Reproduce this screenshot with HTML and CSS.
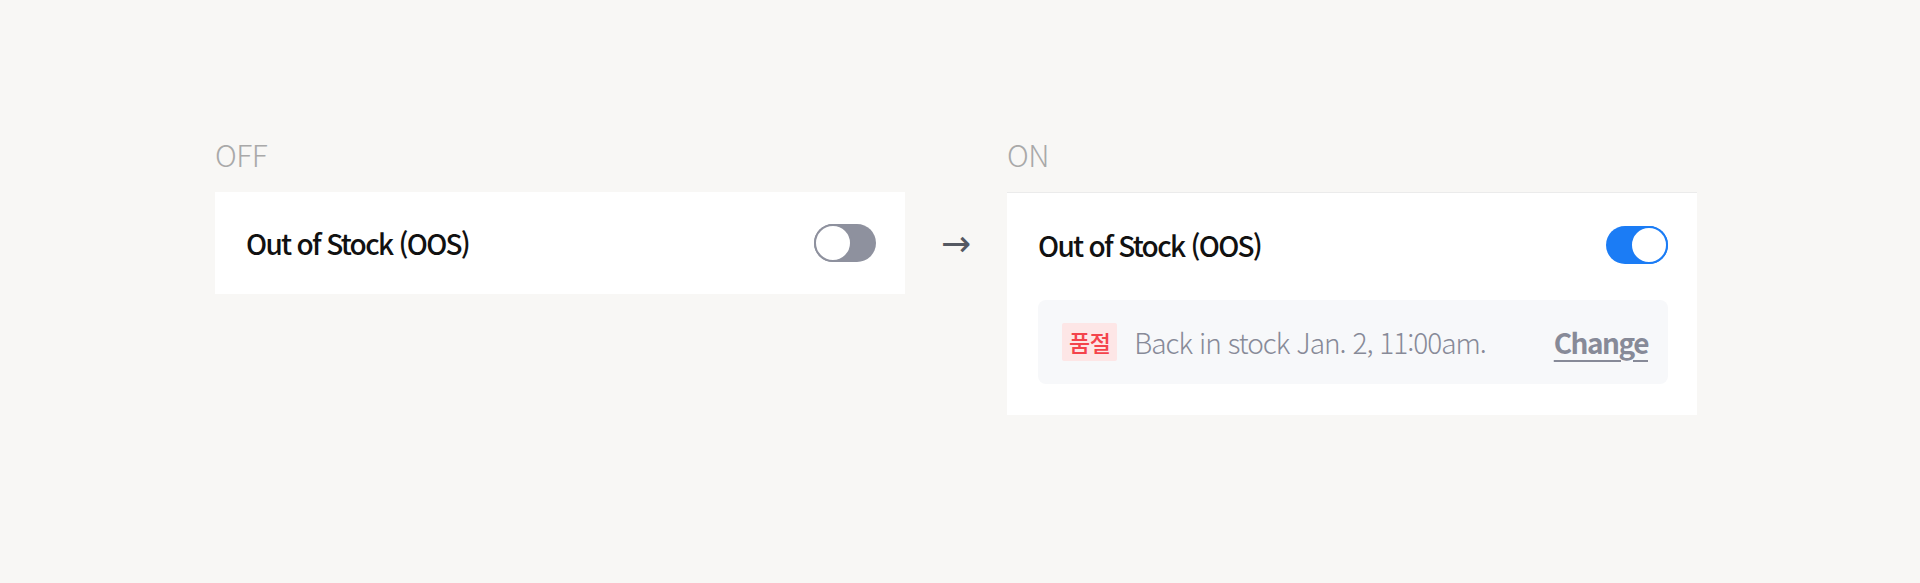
FILE: index.html
```html
<!DOCTYPE html>
<html lang="ko">
<head>
<meta charset="utf-8">
<title>Out of Stock toggle</title>
<link rel="stylesheet" href="styles.css">
</head>
<body>
<main class="stage">
  <section class="state">
    <div class="state-label">OFF</div>
    <div class="card">
      <div class="row">
        <span class="row-title">Out of Stock (OOS)</span>
        <span class="toggle toggle-off"><span class="knob"></span></span>
      </div>
    </div>
  </section>
  <div class="arrow">→</div>
  <section class="state">
    <div class="state-label">ON</div>
    <div class="card card-on">
      <div class="row">
        <span class="row-title">Out of Stock (OOS)</span>
        <span class="toggle toggle-on"><span class="knob"></span></span>
      </div>
      <div class="info">
        <span class="badge">품절</span>
        <span class="info-text">Back in stock Jan. 2, 11:00am.</span>
        <a class="change" href="#">Change</a>
      </div>
    </div>
  </section>
</main>
</body>
</html>
```

FILE: styles.css
```css
* { box-sizing: border-box; }
html, body {
  margin: 0;
  padding: 0;
  background: #f8f7f5;
  font-family: "Noto Sans CJK KR", "Noto Sans", sans-serif;
}
.stage {
  display: flex;
  align-items: flex-start;
  padding: 134px 0 0 215px;
}
.state {
  width: 690px;
  display: flex;
  flex-direction: column;
}
.state-label {
  font-size: 30px;
  font-weight: 300;
  color: #a9a9a9;
  line-height: 40px;
  height: 40px;
  margin-bottom: 18px;
  letter-spacing: -0.5px;
}
.card {
  background: #fff;
  padding: 30px 29px 30px 31px;
}
.card-on {
  border-top: 1px solid #ebebeb;
  padding-top: 31px;
  padding-bottom: 31px;
}
.row {
  display: flex;
  align-items: center;
  justify-content: space-between;
  height: 42px;
}
.row-title {
  font-size: 28px;
  font-weight: 500;
  color: #111;
  letter-spacing: -1.7px;
}
.toggle {
  position: relative;
  width: 62px;
  height: 38px;
  border-radius: 19px;
  display: inline-block;
}
.toggle-off { background: #8e919e; }
.toggle-on { background: #1b7cf5; }
.knob {
  position: absolute;
  top: 0;
  width: 38px;
  height: 38px;
  border-radius: 50%;
  background: #fff;
}
.toggle-off .knob { left: 0; border: 2px solid #8e919e; }
.toggle-on .knob { right: 0; border: 2px solid #1b7cf5; }
.arrow {
  width: 102px;
  text-align: center;
  margin-top: 86px;
  font-size: 36px;
  line-height: 48px;
  color: #555962;
  font-family: "DejaVu Sans", sans-serif;
}
.info {
  margin-top: 34px;
  height: 84px;
  background: #f7f8fa;
  border-radius: 8px;
  display: flex;
  align-items: center;
  padding: 0 20px 0 24px;
}
.badge {
  height: 38px;
  line-height: 38px;
  padding: 0 7px;
  background: #fde6e6;
  color: #f4434b;
  font-size: 23px;
  font-weight: 500;
  border-radius: 2px;
  letter-spacing: -0.5px;
}
.info-text {
  margin-left: 17px;
  font-size: 28px;
  font-weight: 300;
  color: #878a98;
  flex: 1;
  letter-spacing: -1px;
}
.change {
  font-size: 28px;
  font-weight: 700;
  color: #878a98;
  text-decoration: underline;
  text-decoration-thickness: 2px;
  text-underline-offset: 6px;
  letter-spacing: -1.5px;
}
```
